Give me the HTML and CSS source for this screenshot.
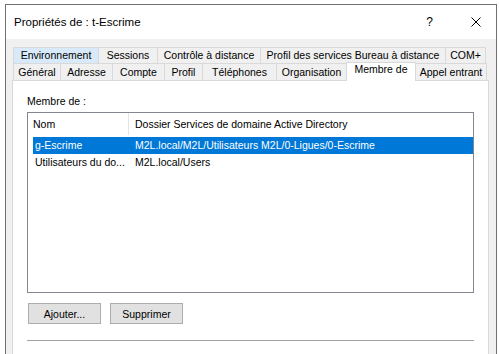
FILE: index.html
```html
<!DOCTYPE html>
<html lang="fr">
<head>
    <meta charset="UTF-8">
    <meta name="viewport" content="width=device-width, initial-scale=1.0">
    <title>Propriétés de : t-Escrime</title>
    <link rel="stylesheet" href="styles.css">
</head>
<body>
    <div class="window">
        <div class="titlebar">
            <span class="title">Propriétés de : t-Escrime</span>
            <span class="caption-help">?</span>
            <svg class="caption-close" width="10" height="10" viewBox="0 0 10 10">
                <path d="M0.5 0.5 L9.5 9.5 M9.5 0.5 L0.5 9.5" stroke="#000" stroke-width="1" fill="none"/>
            </svg>
        </div>
        <div class="dialog">
            <div class="tabs">
                <div class="tab-row tab-row-top">
                    <div class="tab tab-hover">Environnement</div>
                    <div class="tab">Sessions</div>
                    <div class="tab">Contrôle à distance</div>
                    <div class="tab">Profil des services Bureau à distance</div>
                    <div class="tab">COM+</div>
                </div>
                <div class="tab-row tab-row-bottom">
                    <div class="tab">Général</div>
                    <div class="tab">Adresse</div>
                    <div class="tab">Compte</div>
                    <div class="tab">Profil</div>
                    <div class="tab">Téléphones</div>
                    <div class="tab">Organisation</div>
                    <div class="tab tab-active">Membre de</div>
                    <div class="tab">Appel entrant</div>
                </div>
            </div>
            <div class="panel">
                <p class="label">Membre de :</p>
                <div class="listview">
                    <div class="lv-header">
                        <div class="lv-head lv-head-name">Nom</div>
                        <div class="lv-head">Dossier Services de domaine Active Directory</div>
                    </div>
                    <div class="lv-rows">
                        <div class="lv-row selected">
                            <span class="lv-cell">g-Escrime</span>
                            <span class="lv-cell">M2L.local/M2L/Utilisateurs M2L/0-Ligues/0-Escrime</span>
                        </div>
                        <div class="lv-row">
                            <span class="lv-cell">Utilisateurs du do...</span>
                            <span class="lv-cell">M2L.local/Users</span>
                        </div>
                    </div>
                </div>
                <div class="buttons">
                    <button class="btn">Ajouter...</button>
                    <button class="btn">Supprimer</button>
                </div>
                <div class="separator"></div>
            </div>
        </div>
    </div>
</body>
</html>
```

FILE: styles.css
```css
* {
    margin: 0;
    padding: 0;
    box-sizing: border-box;
    font-family: "Liberation Sans", Arial, sans-serif;
}

body {
    background-color: #ffffff;
    color: #000;
    font-size: 10.5px;
    overflow: hidden;
}

/* la fenêtre est coupée en bas de la capture */
.window {
    margin: 4px 0 0 5px;
    width: 492px;
    height: 350px;
    border: 1px solid #707070;
    border-bottom: none;
    background-color: #f0f0f0;
    overflow: hidden;
}

/* barre de titre */
.titlebar {
    height: 34px;
    display: flex;
    align-items: center;
    padding: 0 15px 0 8px;
    background-color: #ffffff;
}

.title {
    flex: 1;
    font-size: 11.5px;
}

.caption-help {
    font-size: 12px;
    margin-right: 38px;
}

.caption-close {
    display: block;
}

.dialog {
    padding: 8px 7px 0 6px;
}

/* onglets */
.tabs {
    margin-left: 1px;
}

.tab-row {
    display: grid;
}

.tab-row-top {
    grid-template-columns: 86px 59px 103px 185px 40px;
    height: 16px;
}

.tab-row-bottom {
    grid-template-columns: 48px 52px 52px 38px 74px 70px 69px 71px;
    height: 17px;
}

.tab {
    border: 1px solid #d9d9d9;
    border-bottom: none;
    background-color: #f0f0f0;
    text-align: center;
    white-space: nowrap;
    line-height: 15px;
}

.tab + .tab {
    border-left: none;
}

.tab-row-bottom .tab {
    line-height: 16px;
}

.tab-hover {
    background-color: #d8eaf9;
}

.tab-row-bottom .tab-active {
    position: relative;
    z-index: 1;
    margin: -1px 0 -1px -1px;
    border-left: 1px solid #d9d9d9;
    background-color: #ffffff;
    line-height: 13px;
}

/* page de l'onglet */
.panel {
    height: 280px;
    padding: 13px 0 0 14px;
    border: 1px solid #d9d9d9;
    background-color: #ffffff;
}

.label {
    line-height: 15px;
}

.listview {
    margin-top: 3px;
    width: 447px;
    height: 181px;
    border: 1px solid #828790;
}

.lv-header {
    display: grid;
    grid-template-columns: 101px 1fr;
    height: 22px;
    line-height: 22px;
}

.lv-head {
    padding-left: 6px;
}

.lv-head-name {
    padding-left: 5px;
    border-right: 1px solid #e5e5e5;
}

.lv-rows {
    padding-top: 2px;
}

.lv-row {
    display: grid;
    grid-template-columns: 100px 1fr;
    height: 17px;
    line-height: 17px;
    margin-left: 5px;
    white-space: nowrap;
}

.lv-cell {
    padding-left: 2px;
    overflow: hidden;
}

.lv-row.selected {
    background-color: #0078d7;
    color: #ffffff;
}

.buttons {
    display: flex;
    gap: 9px;
    margin: 10px 0 0 1px;
}

.btn {
    width: 73px;
    height: 21px;
    border: 1px solid #adadad;
    background-color: #e1e1e1;
    font-size: 10.5px;
    color: #000;
}

.separator {
    margin-top: 16px;
    width: 447px;
    border-top: 1px solid #a0a0a0;
}
```
